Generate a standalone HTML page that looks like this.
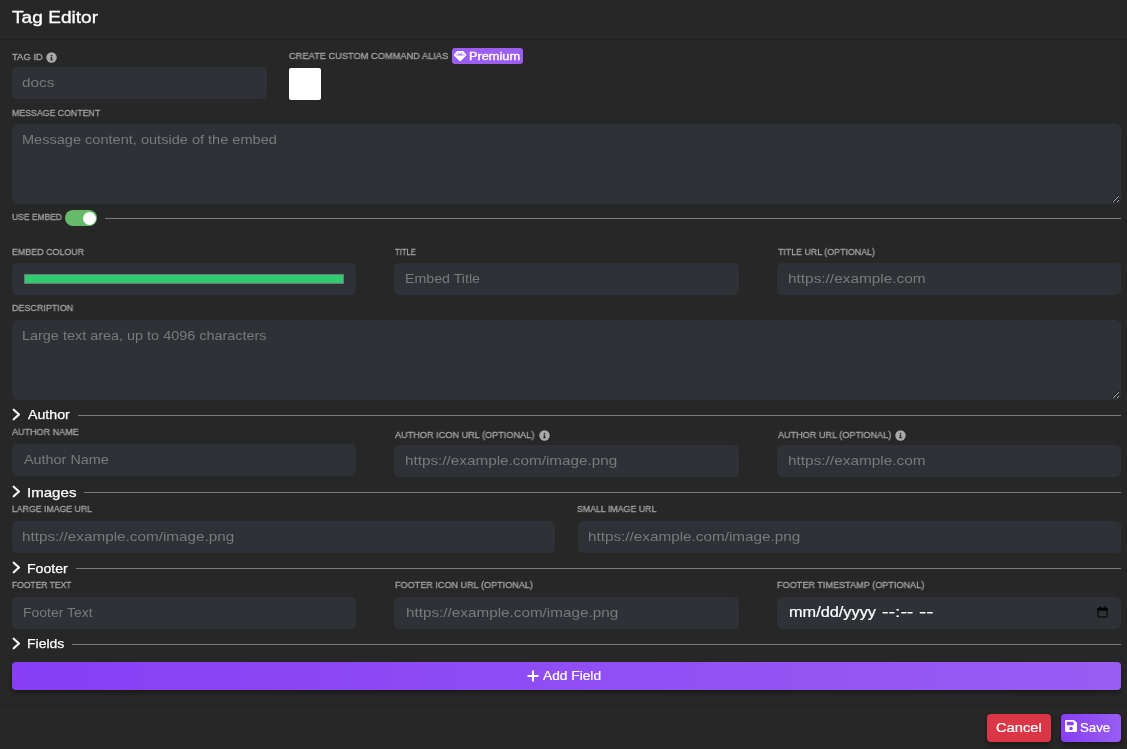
<!DOCTYPE html>
<html><head><meta charset="utf-8"><style>
*{box-sizing:border-box;margin:0;padding:0}
html,body{width:1127px;height:749px;overflow:hidden;background:#272727;font-family:"Liberation Sans",sans-serif}
.a{position:absolute;white-space:pre;line-height:1;will-change:transform}
.b{position:absolute}
textarea{position:absolute;border:1px solid #2e3136;outline:0;background:#2e3136;border-radius:5px;font-family:"Liberation Sans",sans-serif;font-size:14px;line-height:1;color:#fff;resize:vertical}
</style></head><body>
<div class="a" id="t0" style="left:12.0px;top:8.56px;font-size:17.3px;color:#fff;transform:scaleX(1.1064);transform-origin:0 0;-webkit-text-stroke:0.3px #fff">Tag Editor</div>
<div class="b" style="left:0px;top:39px;width:1127px;height:1px;background:#202020;border-radius:0px;"></div>
<div class="a" id="t1" style="left:12.0px;top:51.96px;font-size:9.5px;color:#a3a3a3;transform:scaleX(0.9935);transform-origin:0 0;-webkit-text-stroke:0.3px #a3a3a3">TAG ID</div>
<svg class="b" style="left:46.0px;top:52.1px" width="11" height="11" viewBox="0 0 11 11"><circle cx="5.5" cy="5.5" r="5.2" fill="#a9a9a9"/><circle cx="5.5" cy="3.6" r="0.85" fill="#272727"/><path d="M4.4 5.0h1.75v2.5h0.95v0.8h-3.2v-0.8h0.95v-1.8h-0.45z" fill="#272727"/></svg>
<div class="b" style="left:12px;top:67px;width:255px;height:32px;background:#2e3136;border-radius:5px;"></div>
<div class="a" id="t2" style="left:21.73px;top:75.90px;font-size:13px;color:#7a7a7a;transform:scaleX(1.1769);transform-origin:0 0;">docs</div>
<div class="a" id="t3" style="left:289.0px;top:51.16px;font-size:9.5px;color:#a3a3a3;transform:scaleX(0.9755);transform-origin:0 0;-webkit-text-stroke:0.3px #a3a3a3">CREATE CUSTOM COMMAND ALIAS</div>
<div class="b" style="left:452px;top:48px;width:71px;height:16px;background:#9b5df2;border-radius:3px;"></div>
<svg class="b" style="left:454.4px;top:50.5px" width="12.3" height="10.4" viewBox="5 24 502 456" preserveAspectRatio="none"><path fill="#fff" d="M116.7 33.8c4.5-6.1 11.7-9.8 19.3-9.8H376c7.6 0 14.8 3.6 19.3 9.8l112 152c6.8 9.2 6.100 21.9-1.5 30.4l-232 256c-4.5 5-11 7.9-17.8 7.9s-13.2-2.9-17.8-7.9l-232-256c-7.7-8.5-8.3-21.2-1.5-30.4l112-152zm38.5 39.8c-3.3 2.5-4.2 7-2.1 10.5l57.4 95.6L63.3 192c-4.1 .3-7.3 3.8-7.3 8s3.2 7.6 7.3 8l192 16c.4 0 .9 0 1.3 0l192-16c4.1-.3 7.3-3.8 7.3-8s-3.2-7.6-7.3-8L301.5 179.8l57.4-95.6c2.1-3.5 1.2-8.1-2.1-10.5s-7.9-2-10.7 1L256 172.8 165.9 74.6c-2.8-3-7.4-3.4-10.7-1z"/></svg>
<div class="a" id="t4" style="left:468.92px;top:50.59px;font-size:11px;color:#fff;transform:scaleX(1.1591);transform-origin:0 0;-webkit-text-stroke:0.35px #fff">Premium</div>
<div class="b" style="left:289px;top:68px;width:32px;height:32px;background:#fff;border-radius:2px;"></div>
<div class="a" id="t5" style="left:12.0px;top:108.06px;font-size:9.5px;color:#a3a3a3;transform:scaleX(0.9229);transform-origin:0 0;-webkit-text-stroke:0.3px #a3a3a3">MESSAGE CONTENT</div>
<textarea style="left:12px;top:124px;width:1109px;height:80px"></textarea>
<div class="a" id="t6" style="left:21.82px;top:133.40px;font-size:13px;color:#7a7a7a;transform:scaleX(1.1195);transform-origin:0 0;">Message content, outside of the embed</div>
<div class="a" id="t7" style="left:12.0px;top:211.76px;font-size:9.5px;color:#a3a3a3;transform:scaleX(0.8929);transform-origin:0 0;-webkit-text-stroke:0.3px #a3a3a3">USE EMBED</div>
<div class="b" style="left:65px;top:210px;width:32px;height:16px;background:#66bb6a;border-radius:8px;"></div>
<div class="b" style="left:83.2px;top:212.3px;width:12.6px;height:12.6px;background:#fff;border-radius:7px;"></div>
<div class="b" style="left:105px;top:218px;width:1016px;height:1px;background:#7a7a7a;border-radius:0px;"></div>
<div class="a" id="t8" style="left:12.0px;top:246.86px;font-size:9.5px;color:#a3a3a3;transform:scaleX(0.9351);transform-origin:0 0;-webkit-text-stroke:0.3px #a3a3a3">EMBED COLOUR</div>
<div class="b" style="left:12px;top:263px;width:344px;height:32px;background:#2e3136;border-radius:5px;"></div>
<div class="b" style="left:24px;top:274px;width:319.5px;height:10.2px;background:#2ecc71;border-radius:0px;border:1px solid #767676"></div>
<div class="a" id="t9" style="left:395.0px;top:246.86px;font-size:9.5px;color:#a3a3a3;transform:scaleX(0.8077);transform-origin:0 0;-webkit-text-stroke:0.3px #a3a3a3">TITLE</div>
<div class="b" style="left:394px;top:263px;width:345px;height:32px;background:#2e3136;border-radius:5px;"></div>
<div class="a" id="t10" style="left:404.86px;top:271.80px;font-size:13px;color:#7a7a7a;transform:scaleX(1.0925);transform-origin:0 0;">Embed Title</div>
<div class="a" id="t11" style="left:778.0px;top:246.86px;font-size:9.5px;color:#a3a3a3;transform:scaleX(0.9298);transform-origin:0 0;-webkit-text-stroke:0.3px #a3a3a3">TITLE URL (OPTIONAL)</div>
<div class="b" style="left:777px;top:263px;width:344px;height:32px;background:#2e3136;border-radius:5px;"></div>
<div class="a" id="t12" style="left:788.04px;top:271.80px;font-size:13px;color:#7a7a7a;transform:scaleX(1.1825);transform-origin:0 0;">https://example.com</div>
<div class="a" id="t13" style="left:12.0px;top:302.76px;font-size:9.5px;color:#a3a3a3;transform:scaleX(0.9422);transform-origin:0 0;-webkit-text-stroke:0.3px #a3a3a3">DESCRIPTION</div>
<textarea style="left:12px;top:320px;width:1109px;height:80px"></textarea>
<div class="a" id="t14" style="left:21.84px;top:328.80px;font-size:13px;color:#7a7a7a;transform:scaleX(1.1096);transform-origin:0 0;">Large text area, up to 4096 characters</div>
<svg class="b" style="left:10px;top:406.5px" width="14" height="16" viewBox="0 0 14 16"><path d="M3.7 2.7 L9.0 7.5 L3.7 12.3" fill="none" stroke="#fff" stroke-width="2.1" stroke-linecap="round" stroke-linejoin="round"/></svg>
<div class="a" id="t15" style="left:28.0px;top:408.37px;font-size:13.5px;color:#fff;transform:scaleX(1.0500);transform-origin:0 0;-webkit-text-stroke:0.25px #fff">Author</div>
<div class="b" style="left:78px;top:415px;width:1043px;height:1px;background:#7a7a7a;border-radius:0px;"></div>
<div class="a" id="t16" style="left:12.0px;top:426.96px;font-size:9.5px;color:#a3a3a3;transform:scaleX(0.9514);transform-origin:0 0;-webkit-text-stroke:0.3px #a3a3a3">AUTHOR NAME</div>
<div class="b" style="left:12px;top:444px;width:344px;height:32px;background:#2e3136;border-radius:5px;"></div>
<div class="a" id="t17" style="left:23.84px;top:452.80px;font-size:13px;color:#7a7a7a;transform:scaleX(1.1066);transform-origin:0 0;">Author Name</div>
<div class="a" id="t18" style="left:395.0px;top:430.36px;font-size:9.5px;color:#a3a3a3;transform:scaleX(0.9621);transform-origin:0 0;-webkit-text-stroke:0.3px #a3a3a3">AUTHOR ICON URL (OPTIONAL)</div>
<svg class="b" style="left:538.8px;top:429.6px" width="11" height="11" viewBox="0 0 11 11"><circle cx="5.5" cy="5.5" r="5.2" fill="#a9a9a9"/><circle cx="5.5" cy="3.6" r="0.85" fill="#272727"/><path d="M4.4 5.0h1.75v2.5h0.95v0.8h-3.2v-0.8h0.95v-1.8h-0.45z" fill="#272727"/></svg>
<div class="b" style="left:394px;top:445px;width:345px;height:32px;background:#2e3136;border-radius:5px;"></div>
<div class="a" id="t19" style="left:404.74px;top:453.80px;font-size:13px;color:#7a7a7a;transform:scaleX(1.1749);transform-origin:0 0;">https://example.com/image.png</div>
<div class="a" id="t20" style="left:778.0px;top:430.36px;font-size:9.5px;color:#a3a3a3;transform:scaleX(0.9568);transform-origin:0 0;-webkit-text-stroke:0.3px #a3a3a3">AUTHOR URL (OPTIONAL)</div>
<svg class="b" style="left:894.9px;top:429.5px" width="11" height="11" viewBox="0 0 11 11"><circle cx="5.5" cy="5.5" r="5.2" fill="#a9a9a9"/><circle cx="5.5" cy="3.6" r="0.85" fill="#272727"/><path d="M4.4 5.0h1.75v2.5h0.95v0.8h-3.2v-0.8h0.95v-1.8h-0.45z" fill="#272727"/></svg>
<div class="b" style="left:777px;top:445px;width:344px;height:32px;background:#2e3136;border-radius:5px;"></div>
<div class="a" id="t21" style="left:788.04px;top:453.80px;font-size:13px;color:#7a7a7a;transform:scaleX(1.1825);transform-origin:0 0;">https://example.com</div>
<svg class="b" style="left:10px;top:483.5px" width="14" height="16" viewBox="0 0 14 16"><path d="M3.7 2.7 L9.0 7.5 L3.7 12.3" fill="none" stroke="#fff" stroke-width="2.1" stroke-linecap="round" stroke-linejoin="round"/></svg>
<div class="a" id="t22" style="left:26.88px;top:485.77px;font-size:13.5px;color:#fff;transform:scaleX(1.1163);transform-origin:0 0;-webkit-text-stroke:0.25px #fff">Images</div>
<div class="b" style="left:84px;top:492px;width:1037px;height:1px;background:#7a7a7a;border-radius:0px;"></div>
<div class="a" id="t23" style="left:12.0px;top:503.86px;font-size:9.5px;color:#a3a3a3;transform:scaleX(0.9195);transform-origin:0 0;-webkit-text-stroke:0.3px #a3a3a3">LARGE IMAGE URL</div>
<div class="b" style="left:12px;top:521px;width:543px;height:32px;background:#2e3136;border-radius:5px;"></div>
<div class="a" id="t24" style="left:21.74px;top:529.80px;font-size:13px;color:#7a7a7a;transform:scaleX(1.1749);transform-origin:0 0;">https://example.com/image.png</div>
<div class="a" id="t25" style="left:577.23px;top:503.86px;font-size:9.5px;color:#a3a3a3;transform:scaleX(0.9256);transform-origin:0 0;-webkit-text-stroke:0.3px #a3a3a3">SMALL IMAGE URL</div>
<div class="b" style="left:578px;top:521px;width:543px;height:32px;background:#2e3136;border-radius:5px;"></div>
<div class="a" id="t26" style="left:587.74px;top:529.80px;font-size:13px;color:#7a7a7a;transform:scaleX(1.1749);transform-origin:0 0;">https://example.com/image.png</div>
<svg class="b" style="left:10px;top:559.5px" width="14" height="16" viewBox="0 0 14 16"><path d="M3.7 2.7 L9.0 7.5 L3.7 12.3" fill="none" stroke="#fff" stroke-width="2.1" stroke-linecap="round" stroke-linejoin="round"/></svg>
<div class="a" id="t27" style="left:26.96px;top:561.77px;font-size:13.5px;color:#fff;transform:scaleX(1.0447);transform-origin:0 0;-webkit-text-stroke:0.25px #fff">Footer</div>
<div class="b" style="left:76px;top:568px;width:1045px;height:1px;background:#7a7a7a;border-radius:0px;"></div>
<div class="a" id="t28" style="left:12.0px;top:579.86px;font-size:9.5px;color:#a3a3a3;transform:scaleX(0.8955);transform-origin:0 0;-webkit-text-stroke:0.3px #a3a3a3">FOOTER TEXT</div>
<div class="b" style="left:12px;top:597px;width:344px;height:32px;background:#2e3136;border-radius:5px;"></div>
<div class="a" id="t29" style="left:22.75px;top:605.80px;font-size:13px;color:#7a7a7a;transform:scaleX(1.0750);transform-origin:0 0;">Footer Text</div>
<div class="a" id="t30" style="left:394.78px;top:579.86px;font-size:9.5px;color:#a3a3a3;transform:scaleX(0.9562);transform-origin:0 0;-webkit-text-stroke:0.3px #a3a3a3">FOOTER ICON URL (OPTIONAL)</div>
<div class="b" style="left:394px;top:597px;width:345px;height:32px;background:#2e3136;border-radius:5px;"></div>
<div class="a" id="t31" style="left:405.7px;top:605.80px;font-size:13px;color:#7a7a7a;transform:scaleX(1.1743);transform-origin:0 0;">https://example.com/image.png</div>
<div class="a" id="t32" style="left:777.02px;top:579.86px;font-size:9.5px;color:#a3a3a3;transform:scaleX(0.9588);transform-origin:0 0;-webkit-text-stroke:0.3px #a3a3a3">FOOTER TIMESTAMP (OPTIONAL)</div>
<div class="b" style="left:777px;top:597px;width:344px;height:32px;background:#2e3136;border-radius:5px;"></div>
<div class="a" id="t33" style="left:789.0px;top:605.45px;font-size:14px;color:#fff;transform:scaleX(1.1640);transform-origin:0 0;-webkit-text-stroke:0.2px #fff">mm/dd/yyyy</div>
<div class="a" id="t34" style="left:882.0px;top:605.45px;font-size:14px;color:#fff;transform:scaleX(1.3913);transform-origin:0 0;-webkit-text-stroke:0.2px #fff">--:--</div>
<div class="a" id="t35" style="left:919.0px;top:605.45px;font-size:14px;color:#fff;transform:scaleX(1.5556);transform-origin:0 0;-webkit-text-stroke:0.2px #fff">--</div>
<svg class="b" style="left:1097px;top:606px" width="11" height="12" viewBox="0 0 11 12"><rect x="1" y="2.2" width="9" height="8.8" rx="1.3" fill="none" stroke="#111" stroke-width="1.6"/><rect x="0.5" y="2" width="10" height="2.6" fill="#000"/><rect x="2.4" y="0.4" width="1.3" height="2.5" fill="#000"/><rect x="7.3" y="0.4" width="1.3" height="2.5" fill="#000"/></svg>
<svg class="b" style="left:10px;top:635.5px" width="14" height="16" viewBox="0 0 14 16"><path d="M3.7 2.7 L9.0 7.5 L3.7 12.3" fill="none" stroke="#fff" stroke-width="2.1" stroke-linecap="round" stroke-linejoin="round"/></svg>
<div class="a" id="t36" style="left:26.97px;top:637.37px;font-size:13.5px;color:#fff;transform:scaleX(1.0343);transform-origin:0 0;-webkit-text-stroke:0.25px #fff">Fields</div>
<div class="b" style="left:72px;top:644px;width:1049px;height:1px;background:#7a7a7a;border-radius:0px;"></div>
<div class="b" style="left:12px;top:662px;width:1109px;height:28px;background:linear-gradient(90deg,#873ef5 0%,#995df3 100%);border-radius:4px;box-shadow:0 3px 4px rgba(0,0,0,.35)"></div>
<svg class="b" style="left:527.3px;top:669.8px" width="12" height="12" viewBox="0 0 12 12"><path d="M6 1.3V10.7M1.3 6H10.7" stroke="#fff" stroke-width="2" stroke-linecap="round"/></svg>
<div class="a" id="t37" style="left:543.41px;top:668.90px;font-size:13px;color:#fff;transform:scaleX(1.0564);transform-origin:0 0;-webkit-text-stroke:0.2px #fff">Add Field</div>
<div class="b" style="left:0px;top:705px;width:1127px;height:1px;background:#202020;border-radius:0px;"></div>
<div class="b" style="left:987px;top:714px;width:64px;height:28px;background:#dc3545;border-radius:4px;box-shadow:0 3px 4px rgba(0,0,0,.35)"></div>
<div class="a" id="t38" style="left:995.94px;top:720.90px;font-size:13px;color:#fff;transform:scaleX(1.1300);transform-origin:0 0;-webkit-text-stroke:0.2px #fff">Cancel</div>
<div class="b" style="left:1061px;top:714px;width:60px;height:28px;background:linear-gradient(90deg,#873ef5 0%,#995df3 100%);border-radius:4px;box-shadow:0 3px 4px rgba(0,0,0,.35)"></div>
<svg class="b" style="left:1065.3px;top:719.9px" width="12.2" height="12" viewBox="0 32 448 448"><path fill="#fff" d="M433.941 129.941l-83.882-83.882A48 48 0 0 0 316.118 32H48C21.49 32 0 53.49 0 80v352c0 26.51 21.49 48 48 48h352c26.51 0 48-21.490 48-48V163.882a48 48 0 0 0-14.059-33.941zM224 416c-35.346 0-64-28.654-64-64 0-35.346 28.654-64 64-64s64 28.654 64 64c0 35.346-28.654 64-64 64zm96-304.52V212c0 6.627-5.373 12-12 12H76c-6.627 0-12-5.373-12-12V108c0-6.627 5.373-12 12-12h228.52c3.183 0 6.235 1.264 8.485 3.515l3.48 3.48A11.996 11.996 0 0 1 320 111.48z"/></svg>
<div class="a" id="t39" style="left:1080.19px;top:720.90px;font-size:13px;color:#fff;transform:scaleX(1.0200);transform-origin:0 0;-webkit-text-stroke:0.2px #fff">Save</div>
</body></html>
